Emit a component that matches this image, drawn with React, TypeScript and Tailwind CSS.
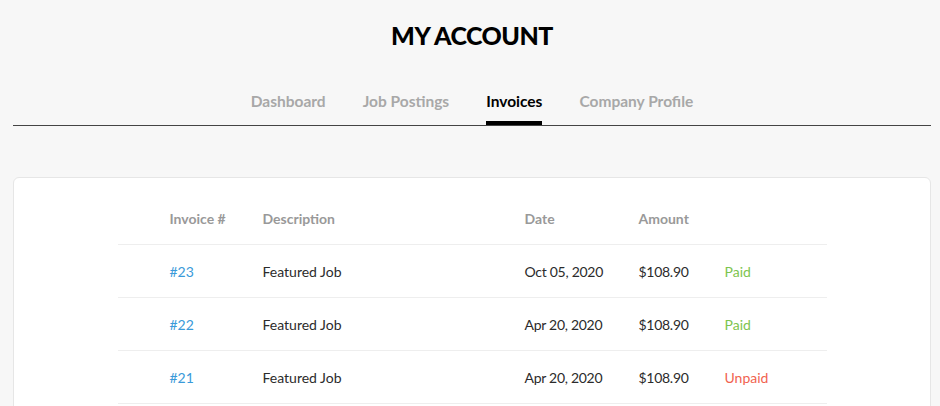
import React from 'react';

const tabs = ['Dashboard', 'Job Postings', 'Invoices', 'Company Profile'];

const invoices = [
  { id: '#23', desc: 'Featured Job', date: 'Oct 05, 2020', amount: '$108.90', paid: true },
  { id: '#22', desc: 'Featured Job', date: 'Apr 20, 2020', amount: '$108.90', paid: true },
  { id: '#21', desc: 'Featured Job', date: 'Apr 20, 2020', amount: '$108.90', paid: false },
];

const cols = 'grid grid-cols-[145px_262px_114px_86px_1fr] items-center';

export default function App() {
  return (
    <div className="min-h-screen bg-[#f7f7f7] font-['Lato','Noto_Sans',sans-serif] text-[#2b2b2b]">
      <div className="ml-[13px] w-[918px]">
        <h1 className="pt-[17px] text-center text-[25px] font-black leading-[36px] tracking-[-0.02em] text-black">
          MY ACCOUNT
        </h1>

        <nav className="mt-[36px] flex justify-center gap-[37px] border-b border-[#444]">
          {tabs.map((t) => {
            const active = t === 'Invoices';
            return (
              <a
                key={t}
                href="#"
                className={`flex flex-col text-[15.5px] font-bold leading-6 ${
                  active ? 'text-black' : 'text-[#a8a8a8]'
                }`}
              >
                <span className="pb-2">{t}</span>
                <span className={`h-1 ${active ? 'bg-black' : 'bg-transparent'}`} />
              </a>
            );
          })}
        </nav>

        <div className="mt-[51px] rounded-md border border-[#e6e6e6] bg-white pt-[14px] pb-4">
          <div className="mx-auto w-[709px] text-[14px]">
            <div className={`${cols} h-[53px] border-b border-[#eeeeee] font-bold text-[#999]`}>
              <span className="pl-[52px]">Invoice #</span>
              <span>Description</span>
              <span>Date</span>
              <span>Amount</span>
              <span />
            </div>
            {invoices.map((inv) => (
              <div key={inv.id} className={`${cols} h-[53px] border-b border-[#eeeeee]`}>
                <a href="#" className="pl-[52px] text-[#3a9ad9]">
                  {inv.id}
                </a>
                <span>{inv.desc}</span>
                <span className="tracking-[-0.02em]">{inv.date}</span>
                <span className="tracking-[-0.02em]">{inv.amount}</span>
                <span className={inv.paid ? 'text-[#7dc44e]' : 'text-[#f1634f]'}>
                  {inv.paid ? 'Paid' : 'Unpaid'}
                </span>
              </div>
            ))}
          </div>
        </div>
      </div>
    </div>
  );
}
